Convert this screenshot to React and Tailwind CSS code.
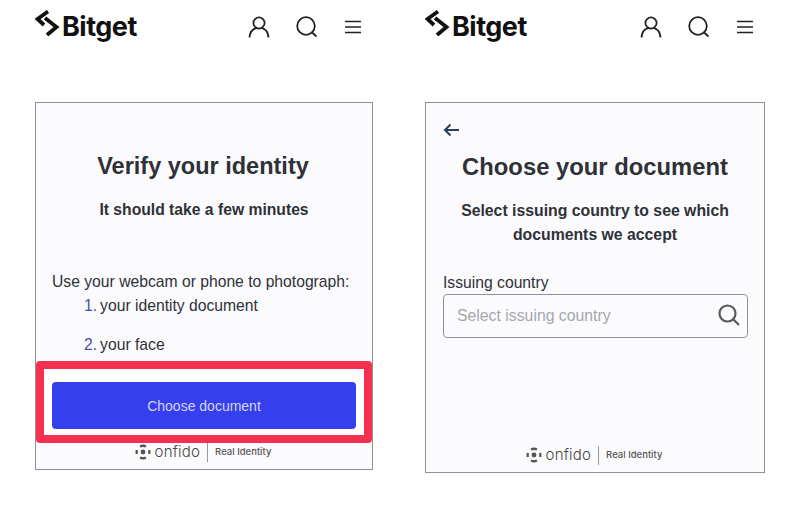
const font = { fontFamily: '"Liberation Sans", Arial, sans-serif' };

function Logo() {
    return (
        <svg width="27" height="26" viewBox="0 0 27 26" fill="none" stroke="#111" strokeWidth="3.8">
            <path d="M13 1.5 L2.5 9 L9 15" />
            <path d="M10 8 L21.5 17 L12 25" />
        </svg>
    );
}

function Header() {
    return (
        <div className="h-[102px] flex items-start justify-between pr-[12px]">
            <div className="flex items-start mt-[10px]">
                <Logo />
                <span className="font-['Inter'] font-bold text-[27px] leading-[32px] tracking-[-0.5px] text-[#111] mt-[1px]">Bitget</span>
            </div>
            <div className="flex items-center mt-[16px]">
                <svg width="22" height="22" viewBox="0 0 22 22" fill="none" stroke="#222" strokeWidth="1.8">
                    <circle cx="11" cy="7" r="5.6" />
                    <path d="M1.5 21.5 C2 16 5 13 8 12.2 M20.5 21.5 C20 16 17 13 14 12.2" />
                </svg>
                <svg width="22" height="22" viewBox="0 0 22 22" fill="none" stroke="#222" strokeWidth="1.8" className="ml-[26px]">
                    <circle cx="10" cy="10" r="8.8" />
                    <path d="M15.5 16 L20.5 20.5" />
                </svg>
                <svg width="16" height="14" viewBox="0 0 16 14" fill="none" stroke="#222" strokeWidth="1.5" className="ml-[27px]">
                    <path d="M0 1.5 H16 M0 7 H16 M0 12.5 H16" />
                </svg>
            </div>
        </div>
    );
}

function Onfido() {
    return (
        <div className="flex items-center justify-center pr-[2px]">
            <svg width="16" height="16" viewBox="0 0 16 16" fill="#555">
                <circle cx="8" cy="8" r="2.4" />
                <path d="M4.5 1.6 A7 7 0 0 1 11.5 1.6 L10.4 3.6 A4.8 4.8 0 0 0 5.6 3.6 Z" />
                <path d="M4.5 14.4 A7 7 0 0 0 11.5 14.4 L10.4 12.4 A4.8 4.8 0 0 1 5.6 12.4 Z" />
                <path d="M0.6 6 H2.8 V10 H0.6 Z M13.2 6 H15.4 V10 H13.2 Z" />
            </svg>
            <span className="font-['Inter'] font-light text-[15px] leading-[20px] text-[#444] ml-[4px] tracking-[0.2px]">onfido</span>
            <span className="w-px h-[19px] bg-[#999] mx-[7px]"></span>
            <span className="font-['Inter'] font-medium text-[9.5px] leading-[12px] text-[#555]">Real Identity</span>
        </div>
    );
}

export default function App() {
    return (
        <div className="w-[800px] h-[529px] bg-white flex pl-[35px] overflow-hidden text-[#2f3138]" style={font}>
            {/* Left phone screenshot */}
            <div className="w-[338px]">
                <Header />
                <div className="h-[368px] border border-[#8f9095] bg-[#fbfbfd] flex flex-col">
                    <h1 className="mt-[49px] pr-[2px] text-center font-bold text-[23.5px] leading-[28px]">Verify your identity</h1>
                    <p className="mt-[20px] text-center font-bold text-[15.7px] leading-[20px]">It should take a few minutes</p>
                    <p className="mt-[52px] ml-[16px] text-[15.7px] leading-[20px]">Use your webcam or phone to photograph:</p>
                    <ol className="ml-[48px] text-[15.7px] leading-[20px]">
                        <li className="mt-[4px]"><span className="text-[#4a4fb5] mr-[3px]">1.</span>your identity document</li>
                        <li className="mt-[19px]"><span className="text-[#4a4fb5] mr-[3px]">2.</span>your face</li>
                    </ol>
                    <div className="mt-[6px] h-[82px] border-[8px] border-[#f8304f] rounded-[4px] bg-white px-[8px] py-[13px]">
                        <button className="w-full h-[47px] pt-[2px] rounded-[4px] bg-[#353fee] text-[#d4d6fb] text-[14px]">Choose document</button>
                    </div>
                    <div className="mt-[-1px]">
                        <Onfido />
                    </div>
                </div>
            </div>

            {/* Right phone screenshot */}
            <div className="w-[340px] ml-[52px]">
                <Header />
                <div className="h-[371px] border border-[#8f9095] bg-[#fbfbfd] flex flex-col">
                    <svg width="18" height="14" viewBox="0 0 18 14" fill="none" stroke="#2c3e5c" strokeWidth="2" className="ml-[17px] mt-[20px]">
                        <path d="M16 7 H2 M7.5 1.5 L2 7 L7.5 12.5" />
                    </svg>
                    <h1 className="mt-[16px] text-center font-bold text-[23.8px] leading-[28px]">Choose your document</h1>
                    <p className="mt-[18px] text-center font-bold text-[15.8px] leading-[24px]">Select issuing country to see which<br />documents we accept</p>
                    <label className="mt-[26px] ml-[17px] text-[15.7px] leading-[20px]">Issuing country</label>
                    <div className="mt-[1px] ml-[17px] mr-[16px] h-[44px] border border-[#8f9095] rounded-[4px] flex items-center justify-between pl-[13px] pr-[6px]">
                        <span className="text-[#a5a6ad] text-[15.8px]">Select issuing country</span>
                        <svg width="24" height="24" viewBox="0 0 24 24" fill="none" stroke="#55575e" strokeWidth="2.2" className="mt-[-3px]">
                            <circle cx="10.5" cy="10.5" r="8" />
                            <path d="M16.5 16.5 L22 22" />
                        </svg>
                    </div>
                    <div className="mt-auto mb-[7px]">
                        <Onfido />
                    </div>
                </div>
            </div>
        </div>
    );
}
